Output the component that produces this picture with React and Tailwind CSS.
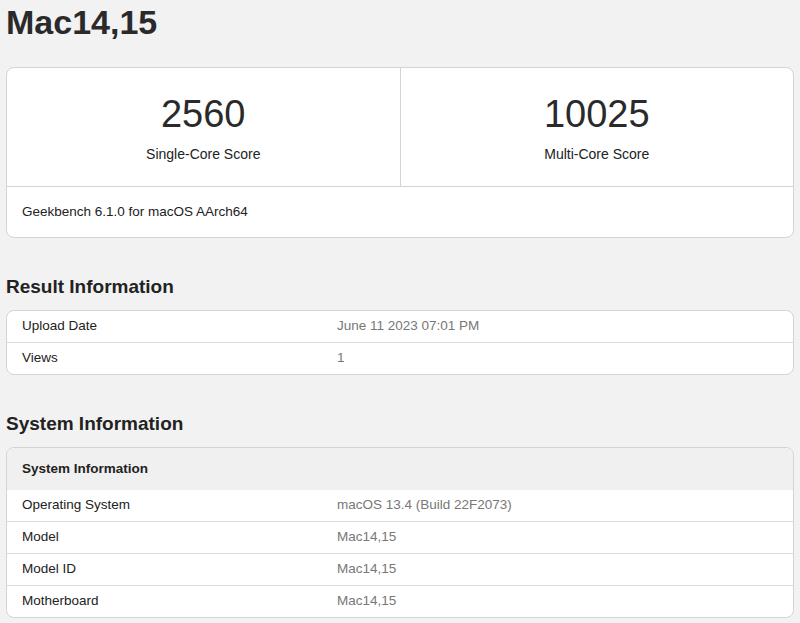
const font = { fontFamily: '"Liberation Sans", Arial, sans-serif' };

function Row({ label, value, first }) {
  return (
    <div className={`flex items-center text-[13.5px] ${first ? 'h-[31px]' : 'h-[32px] border-t border-[#dcdcdc]'}`}>
      <div className="w-[330px] pl-[15px] text-[#222]">{label}</div>
      <div className="text-[#777]">{value}</div>
    </div>
  );
}

export default function App() {
  return (
    <div className="min-h-[623px] bg-[#f2f2f2] px-[6px] text-[#222]" style={font}>
      <h1 className="h-[44px] pt-[2px] text-[34px] font-bold leading-[40px] text-[#2a2a2a]">Mac14,15</h1>
      <div className="mt-[23px] overflow-hidden rounded-[8px] border border-[#d4d4d4] bg-white">
        <div className="flex h-[118px]">
          <div className="flex flex-1 flex-col items-center pt-[24px]">
            <div className="text-[38px] leading-[44px] text-[#2a2a2a]">2560</div>
            <div className="mt-[8px] text-[14px]">Single-Core Score</div>
          </div>
          <div className="flex flex-1 flex-col items-center border-l border-[#d4d4d4] pt-[24px]">
            <div className="text-[38px] leading-[44px] text-[#2a2a2a]">10025</div>
            <div className="mt-[8px] text-[14px]">Multi-Core Score</div>
          </div>
        </div>
        <div className="flex h-[51px] items-center border-t border-[#d4d4d4] pl-[15px] text-[13.5px]">
          Geekbench 6.1.0 for macOS AArch64
        </div>
      </div>

      <h2 className="mt-[37px] text-[19px] font-bold leading-[24px]">Result Information</h2>
      <div className="mt-[11px] overflow-hidden rounded-[8px] border border-[#d4d4d4] bg-white">
        <Row first label="Upload Date" value="June 11 2023 07:01 PM" />
        <Row label="Views" value="1" />
      </div>

      <h2 className="mt-[37px] text-[19px] font-bold leading-[24px]">System Information</h2>
      <div className="mt-[11px] overflow-hidden rounded-[8px] border border-[#d4d4d4] bg-white">
        <div className="flex h-[42px] items-center bg-[#f0f0f0] pl-[15px] text-[13.5px] font-bold">System Information</div>
        <Row first label="Operating System" value="macOS 13.4 (Build 22F2073)" />
        <Row label="Model" value="Mac14,15" />
        <Row label="Model ID" value="Mac14,15" />
        <Row label="Motherboard" value="Mac14,15" />
      </div>
    </div>
  );
}
